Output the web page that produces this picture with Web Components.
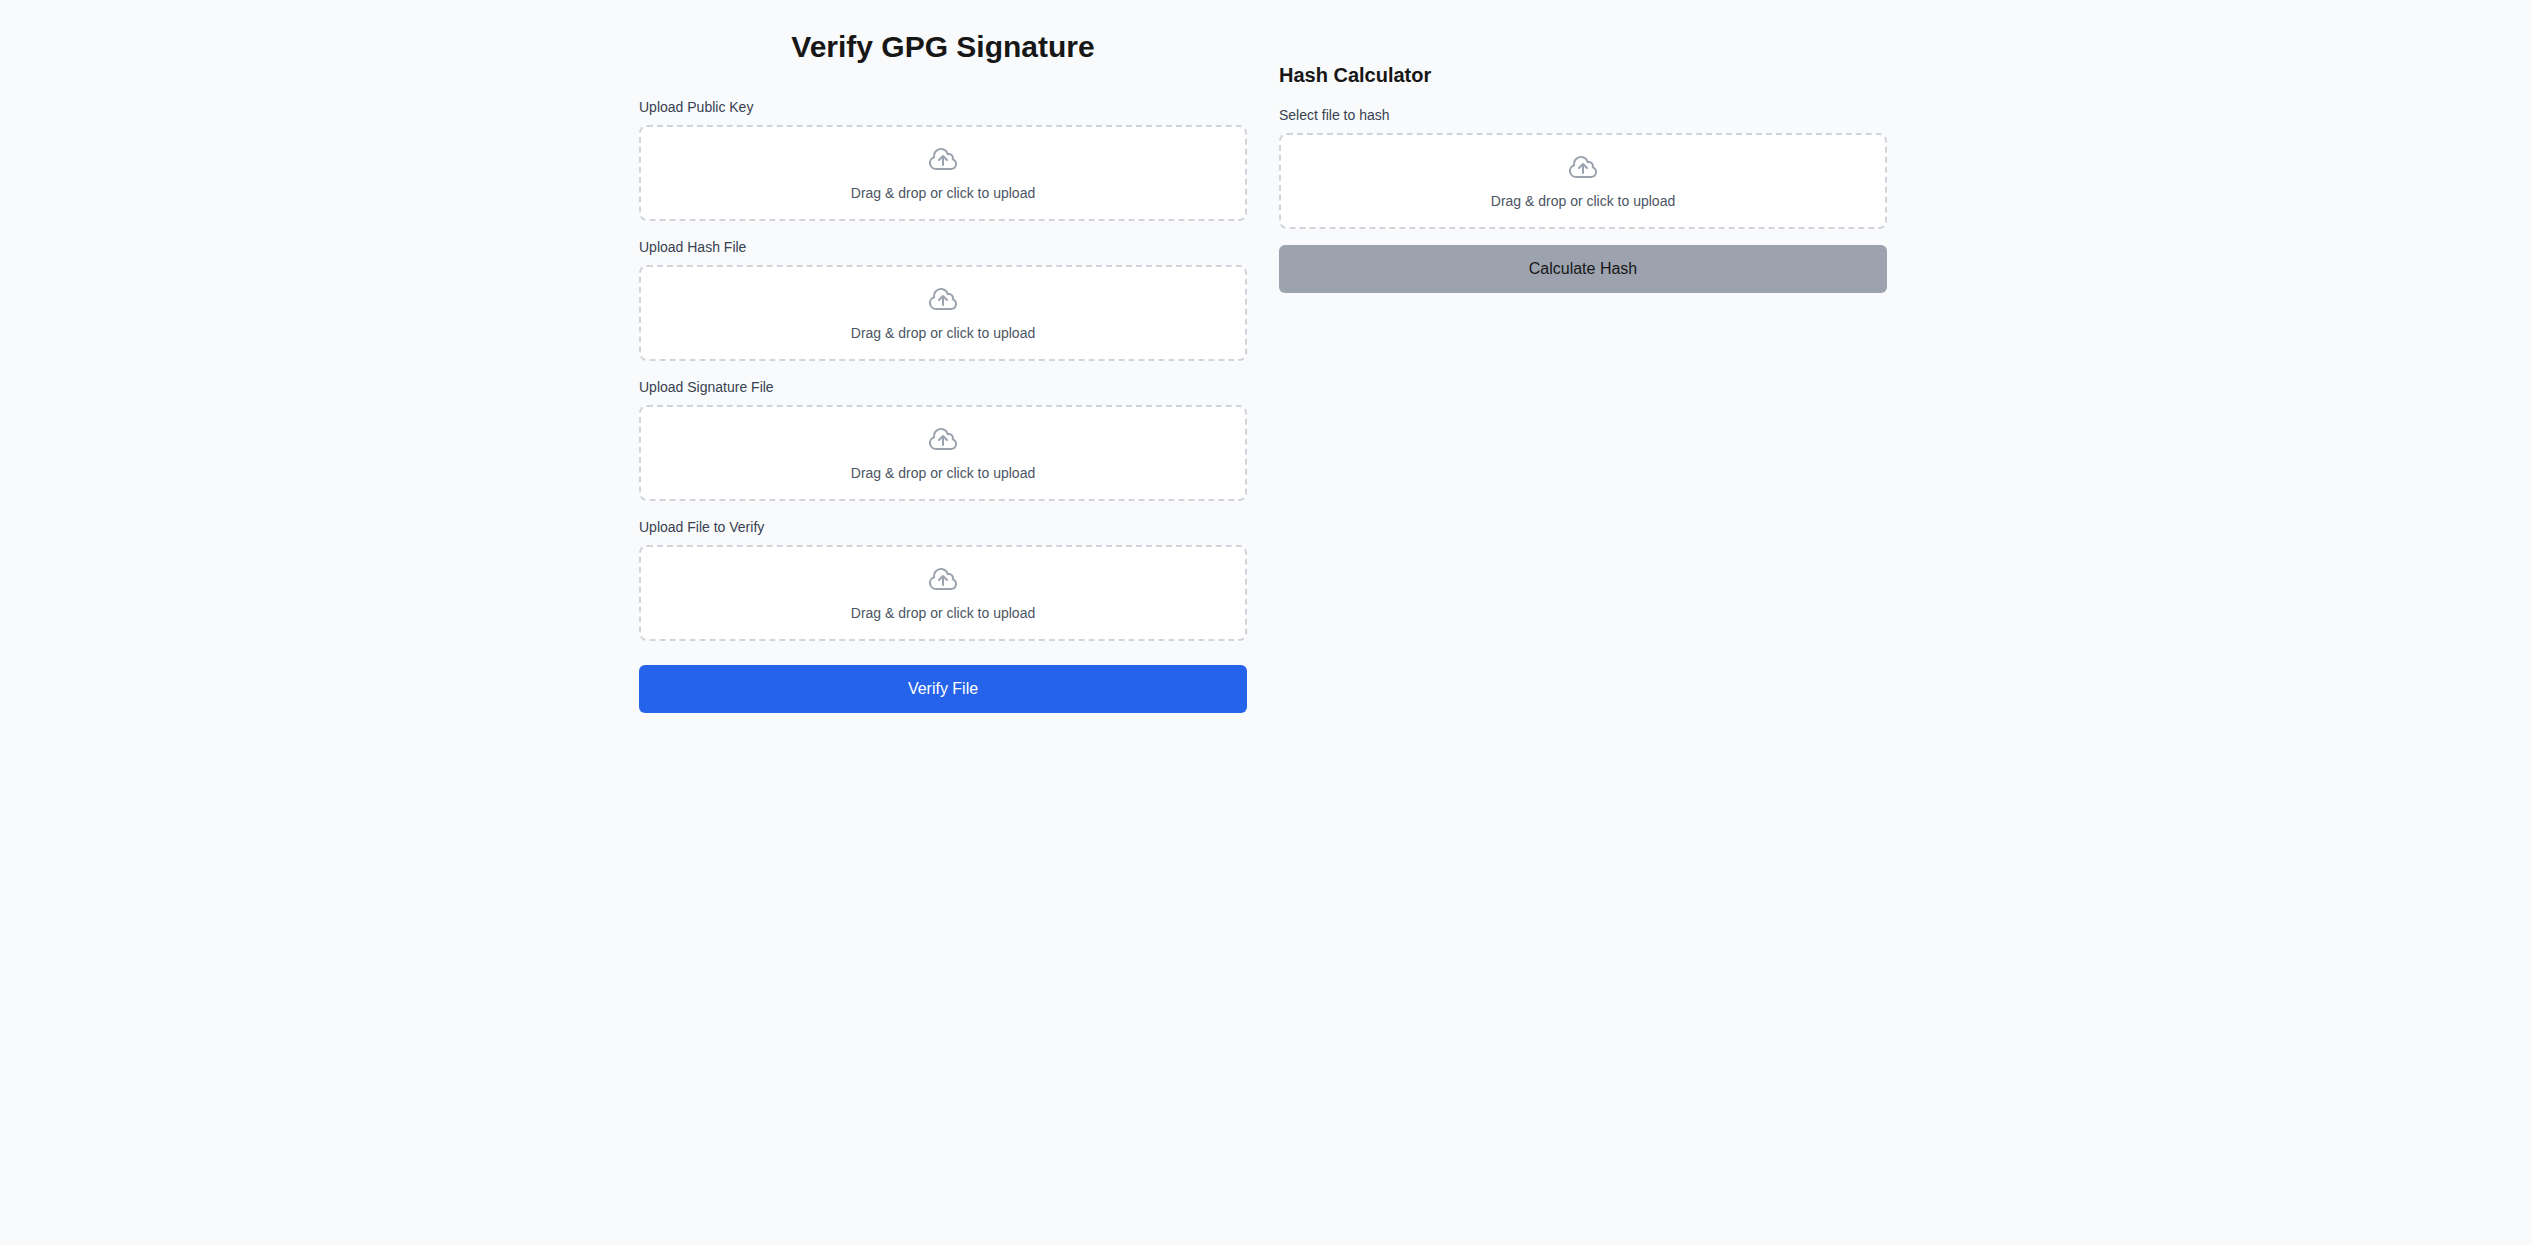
<!DOCTYPE html>
<html lang="en">
<head>
<meta charset="utf-8">
<title>Verify GPG Signature</title>
<style>
html { background: #f9fafb; }
body { margin: 0; color: #171717; font: 16px/24px "Liberation Sans", Arial, sans-serif; }
</style>
</head>
<body>
<gpg-app></gpg-app>
<script>
const define = (name, markup, setup) => {
  const template = document.createElement('template');
  template.innerHTML = markup;
  customElements.define(name, class extends HTMLElement {
    constructor() {
      super();
      this.attachShadow({ mode: 'open' }).append(template.content.cloneNode(true));
    }
    connectedCallback() { if (setup) setup(this, this.shadowRoot); }
  });
};

define('upload-field', `
<style>
:host { display: block; }
.name { display: block; margin-bottom: 8px; font-size: 14px; line-height: 20px; color: #374151; }
.zone { display: flex; flex-direction: column; align-items: center; gap: 8px; padding: 16px;
  border: 2px dashed #d1d5db; border-radius: 8px; background: #fff; cursor: pointer;
  font-size: 14px; line-height: 20px; color: #4b5563; }
.zone:hover, .zone:focus-within { border-color: #9ca3af; }
svg { display: block; width: 32px; height: 32px; color: #9ca3af; }
input { position: absolute; width: 1px; height: 1px; opacity: 0; pointer-events: none; }
</style>
<label class="name" for="file"><slot></slot></label>
<label class="zone">
  <svg viewBox="0 0 24 24" fill="none" stroke="currentColor" stroke-width="1.5" stroke-linecap="round" stroke-linejoin="round" aria-hidden="true"><path d="M12 16.5V9.75m0 0l3 3m-3-3l-3 3M6.75 19.5a4.5 4.5 0 01-1.41-8.775 5.25 5.25 0 0110.233-2.33 3 3 0 013.758 3.848A3.752 3.752 0 0118 19.5H6.75z"/></svg>
  <span>Drag &amp; drop or click to upload</span>
  <input id="file" type="file">
</label>`, (host, root) => {
  const input = root.querySelector('input');
  const text = root.querySelector('span');
  const zone = root.querySelector('.zone');
  const show = () => { if (input.files.length) text.textContent = input.files[0].name; };
  input.addEventListener('change', show);
  zone.addEventListener('dragover', e => e.preventDefault());
  zone.addEventListener('drop', e => { e.preventDefault(); input.files = e.dataTransfer.files; show(); });
});

define('action-button', `
<style>
:host { display: block; }
button { display: block; width: 100%; padding: 12px 16px; border: 0; border-radius: 6px;
  background: #2563eb; color: #fff; font: inherit; cursor: pointer; }
button:disabled { background: #9ca3af; color: #171717; cursor: not-allowed; }
</style>
<button type="button"><slot></slot></button>`, (host, root) => {
  root.querySelector('button').disabled = host.hasAttribute('disabled');
});

define('verify-panel', `
<style>
:host { display: block; }
h1 { margin: 0 0 32px; font-size: 30px; line-height: 36px; font-weight: 700; text-align: center; }
form { display: flex; flex-direction: column; gap: 16px; }
action-button { margin-top: 8px; }
</style>
<h1>Verify GPG Signature</h1>
<form>
  <upload-field>Upload Public Key</upload-field>
  <upload-field>Upload Hash File</upload-field>
  <upload-field>Upload Signature File</upload-field>
  <upload-field>Upload File to Verify</upload-field>
  <action-button>Verify File</action-button>
</form>`);

define('hash-panel', `
<style>
:host { display: block; padding-top: 32px; }
h2 { margin: 0 0 16px; font-size: 20px; line-height: 28px; font-weight: 700; }
form { display: flex; flex-direction: column; gap: 16px; }
</style>
<h2>Hash Calculator</h2>
<form>
  <upload-field>Select file to hash</upload-field>
  <action-button disabled>Calculate Hash</action-button>
</form>`);

define('gpg-app', `
<style>
:host { display: block; padding: 29px 22px 32px 16px; }
main { display: grid; grid-template-columns: repeat(2, minmax(0, 1fr)); gap: 32px; max-width: 1248px; margin: 0 auto; align-items: start; }
@media (max-width: 760px) { main { grid-template-columns: minmax(0, 1fr); } }
</style>
<main>
  <verify-panel></verify-panel>
  <hash-panel></hash-panel>
</main>`);
</script>
</body>
</html>
